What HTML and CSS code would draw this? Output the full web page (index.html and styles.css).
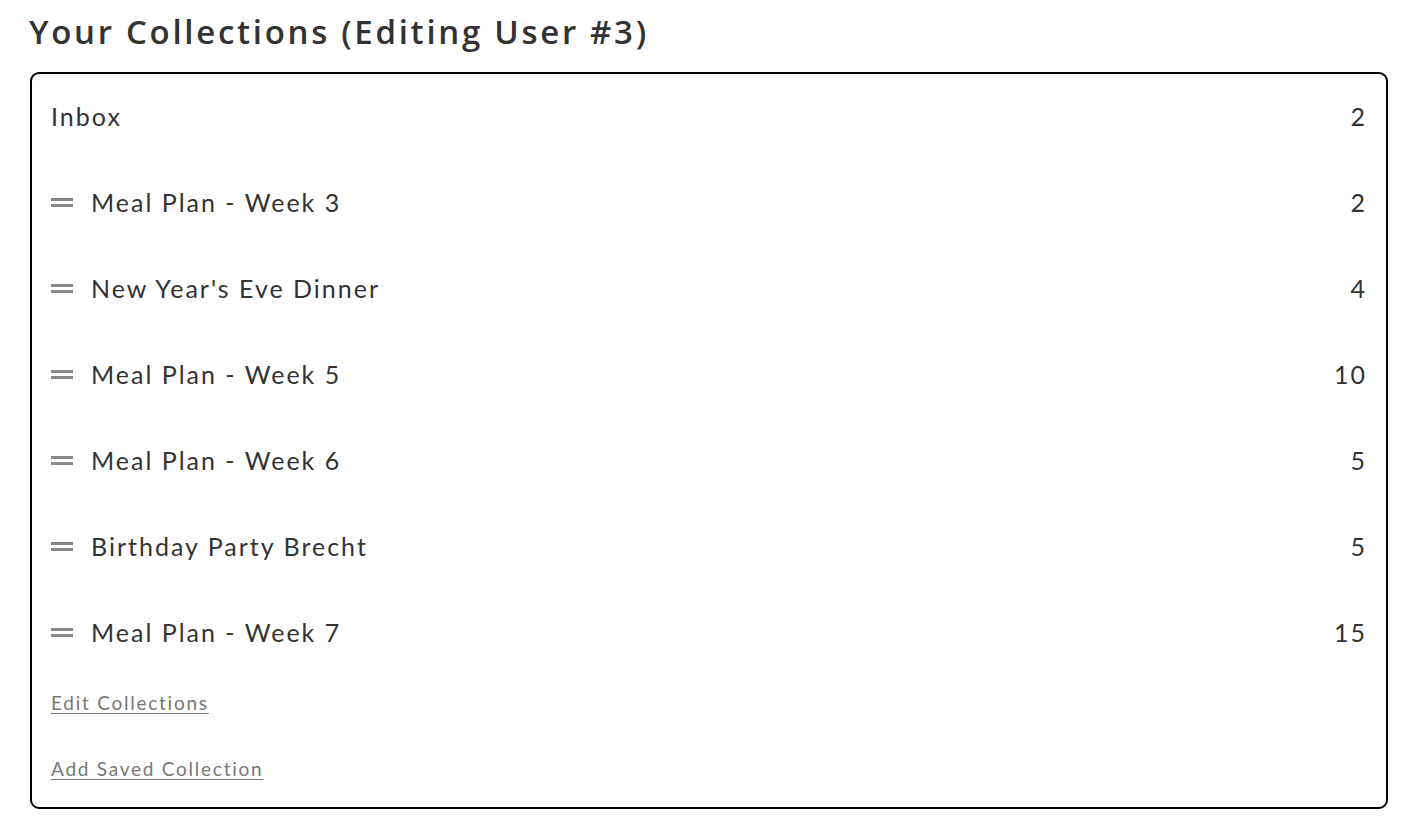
FILE: index.html
```html
<!DOCTYPE html>
<html lang="en">
<head>
<meta charset="utf-8">
<title>Your Collections</title>
<link rel="stylesheet" href="styles.css">
</head>
<body>
<main class="page">
  <h1 class="title">Your Collections (Editing User #3)</h1>
  <section class="panel">
    <ul class="list">
      <li class="row"><span class="name">Inbox</span><span class="count">2</span></li>
      <li class="row"><span class="handle"></span><span class="name">Meal Plan - Week 3</span><span class="count">2</span></li>
      <li class="row"><span class="handle"></span><span class="name">New Year's Eve Dinner</span><span class="count">4</span></li>
      <li class="row"><span class="handle"></span><span class="name">Meal Plan - Week 5</span><span class="count">10</span></li>
      <li class="row"><span class="handle"></span><span class="name">Meal Plan - Week 6</span><span class="count">5</span></li>
      <li class="row"><span class="handle"></span><span class="name">Birthday Party Brecht</span><span class="count">5</span></li>
      <li class="row"><span class="handle"></span><span class="name">Meal Plan - Week 7</span><span class="count">15</span></li>
    </ul>
    <div class="links">
      <a class="link" href="#">Edit Collections</a>
      <a class="link" href="#">Add Saved Collection</a>
    </div>
  </section>
</main>
</body>
</html>
```
FILE: styles.css
```css
html, body {
  margin: 0;
  padding: 0;
  background: #fff;
}
body {
  font-family: "Lato", "Open Sans", sans-serif;
  color: #333;
}
.page {
  padding: 0 28px 0 30px;
}
.title {
  margin: 0;
  padding-top: 12px;
  height: 60px;
  box-sizing: border-box;
  font-family: "Open Sans", "Lato", sans-serif;
  font-size: 33px;
  line-height: 40px;
  font-weight: 600;
  letter-spacing: 2.7px;
  color: #333;
  margin-left: -1px;
}
.panel {
  border: 2px solid #000;
  border-radius: 9px;
  padding: 0 19px 0 19px;
  height: 737px;
  box-sizing: border-box;
  margin-top: 12px;
}
.list {
  list-style: none;
  margin: 0;
  padding: 0;
}
.row {
  display: flex;
  align-items: center;
  height: 86px;
  font-size: 25px;
  letter-spacing: 2px;
  padding-bottom: 2px;
  box-sizing: border-box;
}
.handle {
  width: 22px;
  height: 9px;
  border-top: 3px solid #888;
  border-bottom: 3px solid #888;
  box-sizing: border-box;
  margin-right: 18px;
  flex: none;
}
.name {
  flex: 1;
}
.count {
  text-align: right;
}
.links {
  display: flex;
  flex-direction: column;
  align-items: flex-start;
  gap: 43px;
  padding-top: 15px;
}
.link {
  font-size: 19px;
  line-height: 23px;
  color: #777;
  letter-spacing: 1.75px;
  text-decoration: underline;
  text-underline-offset: 3px;
}
```
